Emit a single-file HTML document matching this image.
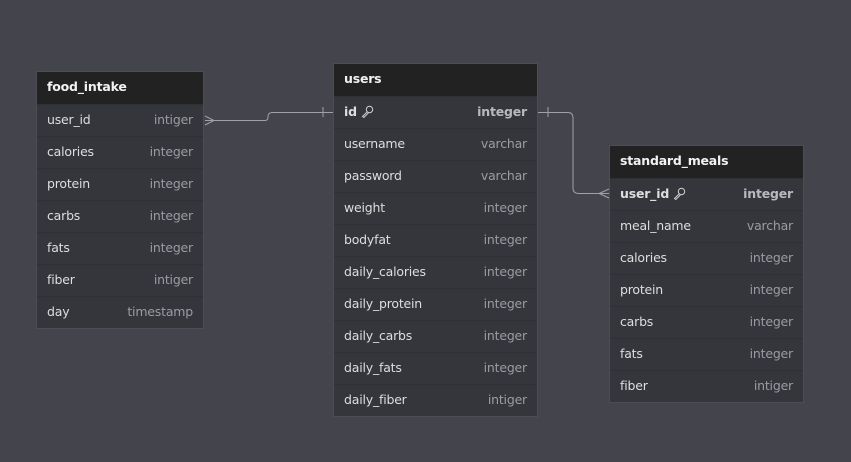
<!DOCTYPE html>
<html><head><meta charset="utf-8"><style>
body{margin:0;width:851px;height:462px;background:#44444d;font-family:"DejaVu Sans","Liberation Sans",sans-serif;overflow:hidden;position:relative}
.t{position:absolute;background:#35353c;box-shadow:0 0 0 1px #4d4d55}
.h{height:32px;background:#222222;color:#f2f2f2;font-weight:bold;font-size:12.5px;line-height:30px;padding-left:10px;letter-spacing:-0.2px}
.r{height:32px;border-top:1px solid #2f2f36;box-sizing:border-box;display:flex;justify-content:space-between;align-items:center;padding:0 10px 2px;font-size:12.5px;letter-spacing:-0.2px;color:#dedede}
.r span:last-child{color:#9b9ba2}
.r.b{font-weight:bold}
.r.b span:last-child{color:#b8b8bd}
svg.l{position:absolute;left:0;top:0}
.k{display:inline-block;vertical-align:-2px;margin-left:4px}
</style></head><body>
<svg class="l" width="851" height="462" fill="none" stroke="#a0a0a8" stroke-width="1">
<path d="M205 120.5 H265 Q268 120.5 268 117 Q268 112.5 272 112.5 H333"/>
<path d="M205 116 L214 120.5 L205 125"/>
<path d="M323 107 V117"/>
<path d="M538 112.5 H568 Q573 112.5 573 118 V188 Q573 193.5 579 193.5 H609"/>
<path d="M548 107 V117"/>
<path d="M609 189 L599 193.5 L609 198"/>
</svg>
<div class="t" style="left:37px;top:72px;width:166px">
<div class="h">food_intake</div>
<div class="r"><span>user_id</span><span>intiger</span></div>
<div class="r"><span>calories</span><span>integer</span></div>
<div class="r"><span>protein</span><span>integer</span></div>
<div class="r"><span>carbs</span><span>integer</span></div>
<div class="r"><span>fats</span><span>integer</span></div>
<div class="r"><span>fiber</span><span>intiger</span></div>
<div class="r"><span>day</span><span>timestamp</span></div>
</div>
<div class="t" style="left:334px;top:64px;width:203px">
<div class="h">users</div>
<div class="r b"><span>id<svg class="k" width="13" height="13" viewBox="0 0 13 13" fill="none" stroke="#d0d0d0" stroke-width="1"><circle cx="8.5" cy="4.5" r="3.2"/><path d="M6.2 6.8 L1.5 11.5 L2.8 12.5 L7.3 8"/></svg></span><span>integer</span></div>
<div class="r"><span>username</span><span>varchar</span></div>
<div class="r"><span>password</span><span>varchar</span></div>
<div class="r"><span>weight</span><span>integer</span></div>
<div class="r"><span>bodyfat</span><span>integer</span></div>
<div class="r"><span>daily_calories</span><span>integer</span></div>
<div class="r"><span>daily_protein</span><span>integer</span></div>
<div class="r"><span>daily_carbs</span><span>integer</span></div>
<div class="r"><span>daily_fats</span><span>integer</span></div>
<div class="r"><span>daily_fiber</span><span>intiger</span></div>
</div>
<div class="t" style="left:610px;top:146px;width:193px">
<div class="h">standard_meals</div>
<div class="r b"><span>user_id<svg class="k" width="13" height="13" viewBox="0 0 13 13" fill="none" stroke="#d0d0d0" stroke-width="1"><circle cx="8.5" cy="4.5" r="3.2"/><path d="M6.2 6.8 L1.5 11.5 L2.8 12.5 L7.3 8"/></svg></span><span>integer</span></div>
<div class="r"><span>meal_name</span><span>varchar</span></div>
<div class="r"><span>calories</span><span>integer</span></div>
<div class="r"><span>protein</span><span>integer</span></div>
<div class="r"><span>carbs</span><span>integer</span></div>
<div class="r"><span>fats</span><span>integer</span></div>
<div class="r"><span>fiber</span><span>intiger</span></div>
</div>
</body></html>
